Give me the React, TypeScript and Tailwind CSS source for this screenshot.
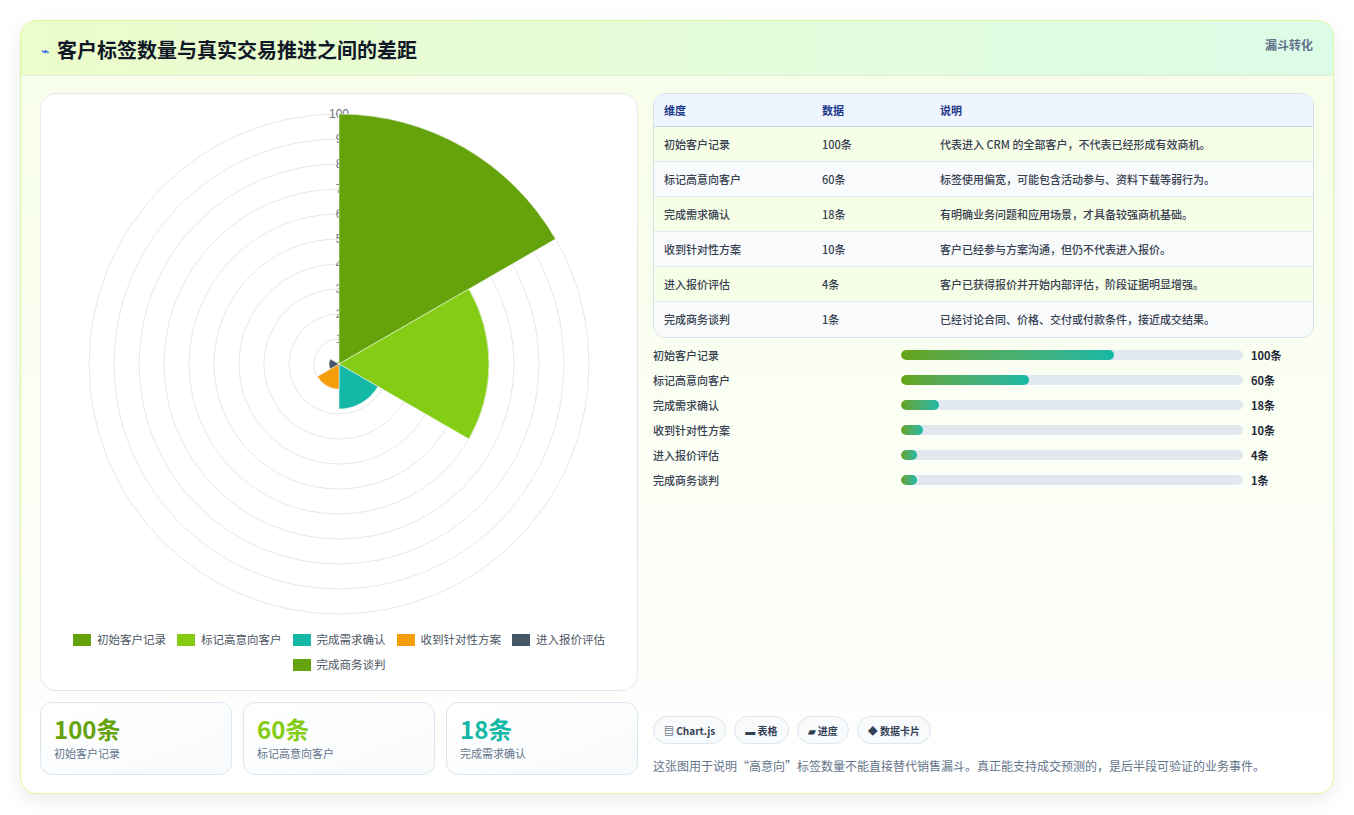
import React from "react";

const FONT = { fontFamily: '"Noto Sans CJK SC", "Noto Sans", sans-serif' };

const ROWS = [
  { name: "初始客户记录", value: 100, desc: "代表进入 CRM 的全部客户，不代表已经形成有效商机。", color: "#65a30d", bar: 62.3 },
  { name: "标记高意向客户", value: 60, desc: "标签使用偏宽，可能包含活动参与、资料下载等弱行为。", color: "#84cc16", bar: 37.4 },
  { name: "完成需求确认", value: 18, desc: "有明确业务问题和应用场景，才具备较强商机基础。", color: "#14b8a6", bar: 11.2 },
  { name: "收到针对性方案", value: 10, desc: "客户已经参与方案沟通，但仍不代表进入报价。", color: "#f59e0b", bar: 6.4 },
  { name: "进入报价评估", value: 4, desc: "客户已获得报价并开始内部评估，阶段证据明显增强。", color: "#475569", bar: 4.7 },
  { name: "完成商务谈判", value: 1, desc: "已经讨论合同、价格、交付或付款条件，接近成交结果。", color: "#65a30d", bar: 4.7 },
];

function sector(cx: number, cy: number, r: number, a0: number, a1: number) {
  const p = (a: number) => {
    const rad = ((a - 90) * Math.PI) / 180;
    return `${cx + r * Math.cos(rad)} ${cy + r * Math.sin(rad)}`;
  };
  return `M ${cx} ${cy} L ${p(a0)} A ${r} ${r} 0 0 1 ${p(a1)} Z`;
}

function PolarChart() {
  const cx = 298;
  const cy = 270;
  const rings = [1, 2, 3, 4, 5, 6, 7, 8, 9, 10];
  const labels = ["1", "2", "3", "4", "5", "6", "7", "8", "9", "100"];
  return (
    <svg width="597" height="530" viewBox="0 0 597 530">
      {rings.map((i) => (
        <circle key={i} cx={cx} cy={cy} r={i * 25} fill="none" stroke="#e5e7eb" strokeWidth="1" />
      ))}
      {labels.map((l, i) => (
        <text key={l} x={cx} y={cy - (i + 1) * 25 + 4} fontSize="12" fill="#6b7280" textAnchor="middle" fontFamily="Liberation Sans, sans-serif">
          {l}
        </text>
      ))}
      {ROWS.map((r, i) => (
        <path key={r.name} d={sector(cx, cy, r.value * 2.5, i * 60, (i + 1) * 60)} fill={r.color} stroke="#fff" strokeWidth="0.5" />
      ))}
    </svg>
  );
}

export default function App() {
  return (
    <div className="min-h-[815px] bg-white px-5 py-5" style={FONT}>
      <div className="overflow-hidden rounded-2xl border border-[#d9f99d] bg-gradient-to-b from-[#f7fee7] to-white shadow-[0_6px_20px_rgba(0,0,0,0.08)]">
        <div className="flex h-[55px] items-start justify-between border-b border-[#e2eedb] bg-gradient-to-r from-[#ecfccb] to-[#dcfce7] px-5">
          <div className="flex items-center gap-[8px] pt-[14px]">
            <span className="text-[14px] text-[#2563eb]">⌁</span>
            <h1 className="text-[20px] font-bold text-[#111827]">客户标签数量与真实交易推进之间的差距</h1>
          </div>
          <span className="pt-[15px] text-[12px] font-semibold text-[#64748b]">漏斗转化</span>
        </div>

        <div className="flex gap-[15px] px-[19px] pb-[18px] pt-[17px]">
          <div className="flex w-[598px] flex-col gap-[11px]">
            <div className="flex h-[598px] flex-col items-center rounded-2xl border border-[#e5e7eb] bg-white">
              <PolarChart />
              <div className="mt-[7px] flex w-[570px] flex-wrap justify-center gap-x-[11px] gap-y-[8px] text-[11.5px] text-[#4b5563]">
                {ROWS.map((r) => (
                  <div key={r.name} className="flex items-center gap-[6px]">
                    <span className="h-[12px] w-[18px]" style={{ background: r.color }} />
                    <span>{r.name}</span>
                  </div>
                ))}
              </div>
            </div>
            <div className="grid grid-cols-3 gap-[11px]">
              {ROWS.slice(0, 3).map((r, i) => (
                <div key={r.name} className="h-[73px] rounded-xl border border-[#dbe6f0] bg-gradient-to-br from-white to-[#f8fafc] px-[13px] pt-[10px]">
                  <div className={`text-[24px] font-bold leading-[32px] ${["text-[#65a30d]", "text-[#84cc16]", "text-[#14b8a6]"][i]}`}>{r.value}条</div>
                  <div className="text-[11px] text-[#64748b]">{r.name}</div>
                </div>
              ))}
            </div>
          </div>

          <div className="flex flex-1 flex-col">
            <div className="overflow-hidden rounded-xl border border-[#d6e0ea] text-[11px]">
              <div className="grid h-[33px] grid-cols-[158px_118px_1fr] items-center border-b border-[#c7d6e6] bg-[#eef5ff] px-[10px] font-semibold text-[#1e3a8a]">
                <span>维度</span><span>数据</span><span>说明</span>
              </div>
              {ROWS.map((r, i) => (
                <div key={r.name} className={`grid h-[35px] grid-cols-[158px_118px_1fr] items-center px-[10px] font-medium text-[#374151] ${i < 5 ? "border-b border-[#e2e8f0]" : ""} ${i % 2 === 0 ? "bg-[#f7fee7]" : "bg-[#f8fafc]"}`}>
                  <span>{r.name}</span><span>{r.value}条</span><span>{r.desc}</span>
                </div>
              ))}
            </div>

            <div className="mt-[8px] flex flex-col gap-[7px]">
              {ROWS.map((r) => (
                <div key={r.name} className="flex h-[18px] items-center text-[11px] font-medium text-[#374151]">
                  <span className="w-[248px]">{r.name}</span>
                  <div className="h-[10px] w-[342px] overflow-hidden rounded-full bg-[#e2e8f0]">
                    <div className="h-full rounded-full bg-gradient-to-r from-[#65a30d] to-[#14b8a6]" style={{ width: `${r.bar}%` }} />
                  </div>
                  <span className="ml-[8px] font-bold text-[#1f2937]">{r.value}条</span>
                </div>
              ))}
            </div>

            <div className="mt-auto flex gap-[8px] text-[10px] font-semibold text-[#334155]">
              {["▤ Chart.js", "▬ 表格", "▰ 进度", "◆ 数据卡片"].map((c) => (
                <span key={c} className="flex h-[28px] items-center rounded-full border border-[#dbe6f0] bg-[#f8fafc] px-[10px]">{c}</span>
              ))}
            </div>
            <p className="mt-[13px] text-[12px] text-[#64748b]">这张图用于说明“高意向”标签数量不能直接替代销售漏斗。真正能支持成交预测的，是后半段可验证的业务事件。</p>
          </div>
        </div>
      </div>
    </div>
  );
}
